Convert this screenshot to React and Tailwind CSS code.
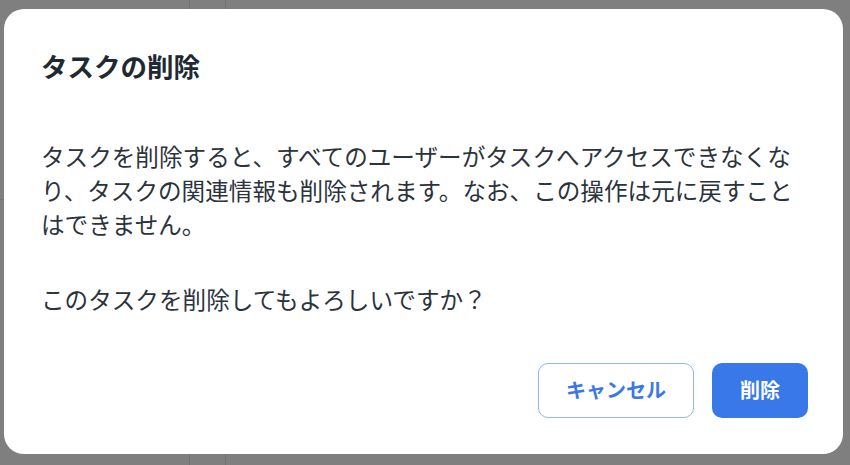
import React from 'react';

const DeleteTaskDialog = () => {
  return (
    <div className="w-[839px] rounded-[20px] bg-white pl-[37px] pr-[35px] pt-[41px] pb-[36px] flex flex-col">
      <h2 className="text-[26.5px] leading-[32px] font-bold text-[#1f2933]">タスクの削除</h2>

      <p className="mt-[57px] text-[23.6px] leading-[34px] text-[#2b333d]">
        タスクを削除すると、すべてのユーザーがタスクへアクセスできなくなり、タスクの関連情報も削除されます。なお、この操作は元に戻すことはできません。
      </p>
      <p className="mt-[41px] text-[23.6px] leading-[34px] text-[#2b333d]">
        このタスクを削除してもよろしいですか？
      </p>

      <div className="mt-[47px] flex justify-end gap-[18px]">
        <button className="h-[55px] px-[27px] rounded-[10px] border border-[#93b7f2] bg-white text-[20px] font-bold text-[#3a78e6]">
          キャンセル
        </button>
        <button className="h-[55px] px-[28px] rounded-[10px] bg-[#3878e8] text-[20px] font-bold text-white">
          削除
        </button>
      </div>
    </div>
  );
};

const App = () => {
  return (
    <div
      className="relative w-[850px] h-[465px] overflow-hidden bg-white"
      style={{ fontFamily: '"Noto Sans CJK JP", "Noto Sans", sans-serif' }}
    >
      {/* page behind the modal */}
      <div className="flex h-full">
        <div className="w-[190px] border-r border-gray-200 flex flex-col">
          <div className="h-[200px] border-b border-gray-200" />
        </div>
        <div className="w-[36px] border-r border-gray-200" />
        <div className="flex-1" />
      </div>

      {/* overlay */}
      <div className="absolute inset-0 bg-black/50 flex items-center justify-center pb-[3px] pr-[3px]">
        <DeleteTaskDialog />
      </div>
    </div>
  );
};

export default App;
